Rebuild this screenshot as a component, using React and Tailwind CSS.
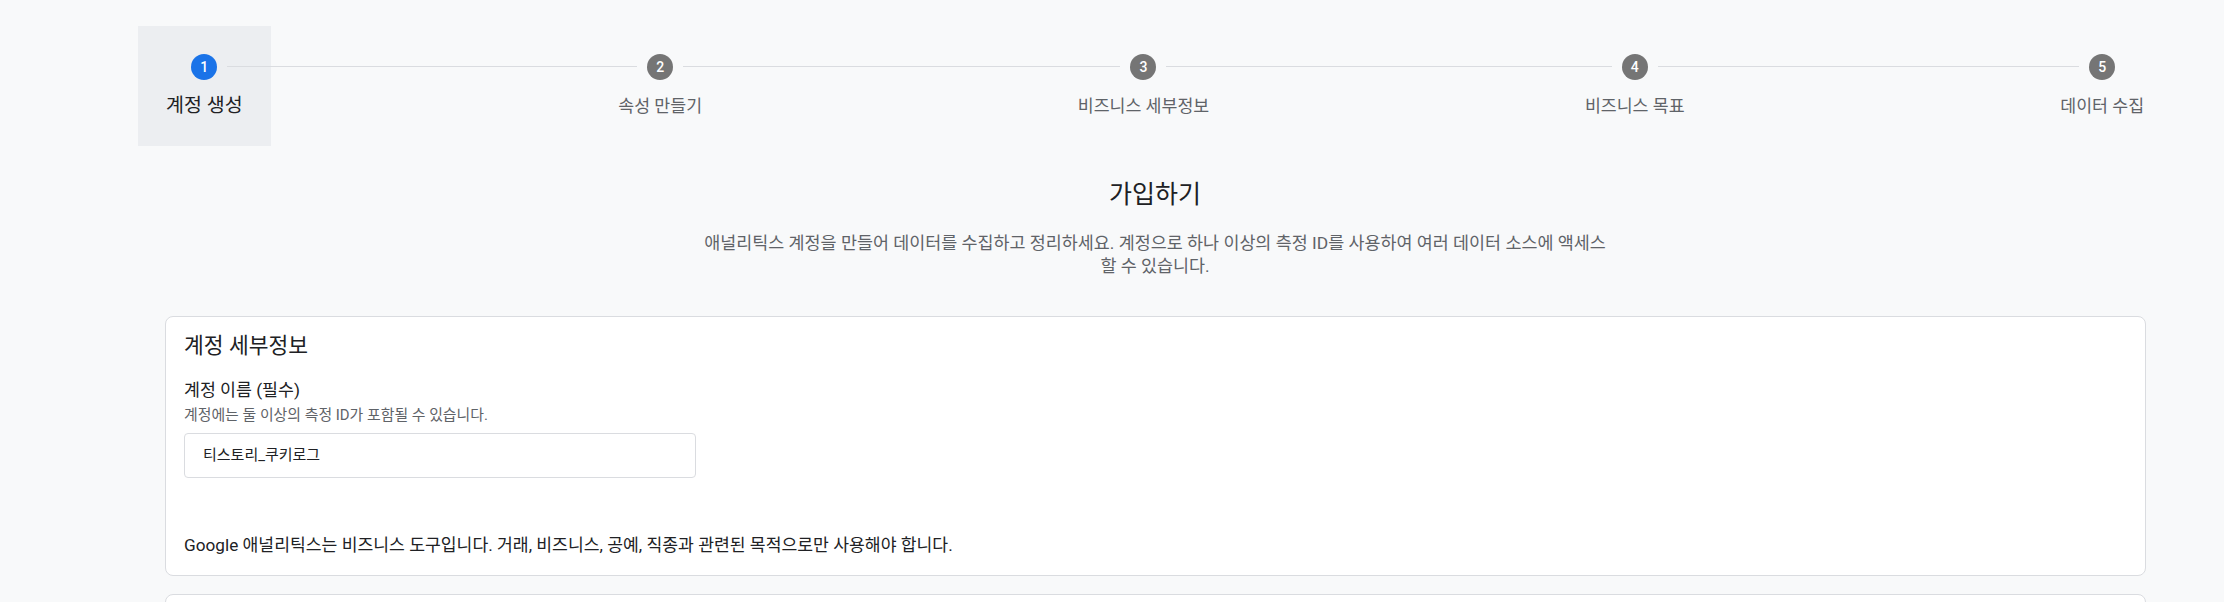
const steps = [
  { n: 1, label: "계정 생성", active: true },
  { n: 2, label: "속성 만들기" },
  { n: 3, label: "비즈니스 세부정보" },
  { n: 4, label: "비즈니스 목표" },
  { n: 5, label: "데이터 수집" },
];

function StepHeader({ step, first, last }) {
  return (
    <div className={`shrink-0 flex flex-col ${step.active ? "bg-[#eceef1]" : ""}`}>
      <div className="flex items-start pt-[28px]">
        <div className={`h-px flex-1 mt-[12px] ${first ? "" : "bg-[#dadce0]"}`} />
        <div
          className={`mx-[10px] w-[26px] h-[26px] rounded-full flex items-center justify-center text-white text-[14px] font-medium ${
            step.active ? "bg-[#1a73e8]" : "bg-[#757575]"
          }`}
        >
          {step.n}
        </div>
        <div className={`h-px flex-1 mt-[12px] ${last ? "" : "bg-[#dadce0]"}`} />
      </div>
      <div
        className={`px-7 pt-[14px] pb-[28px] leading-6 whitespace-nowrap ${
          step.active ? "text-[19.5px] text-[#202124]" : "text-[17.3px] text-[#5f6368]"
        }`}
      >
        {step.label}
      </div>
    </div>
  );
}

function Stepper() {
  const items = [];
  steps.forEach((s, i) => {
    items.push(<StepHeader key={`s${s.n}`} step={s} first={i === 0} last={i === steps.length - 1} />);
    if (i < steps.length - 1) {
      items.push(<div key={`l${s.n}`} className="h-px flex-1 mt-[40px] bg-[#dadce0]" />);
    }
  });
  return <div className="flex items-start mx-[52px]">{items}</div>;
}

export default function App() {
  return (
    <div className="min-h-screen w-full bg-[#f8f9fa] flex font-['Roboto','Noto_Sans_CJK_KR',sans-serif]">
      <div className="w-[86px] shrink-0" />
      <main className="flex-1 pt-[26px]">
        <Stepper />

        <h1 className="mt-[33px] text-center text-[25px] leading-8 text-[#202124]">가입하기</h1>
        <p className="mx-auto mt-[21px] max-w-[912px] text-center text-[17.4px] leading-[23px] text-[#5f6368]">
          애널리틱스 계정을 만들어 데이터를 수집하고 정리하세요. 계정으로 하나 이상의 측정 ID를 사용하여 여러 데이터 소스에 액세스 할 수 있습니다.
        </p>

        <section className="mt-[38px] ml-[79px] mr-[78px] bg-white border border-[#dadce0] rounded-lg px-[18px] pt-[15px] pb-[18px]">
          <h2 className="text-[21.5px] leading-7 text-[#202124]">계정 세부정보</h2>
          <div className="mt-[18px] text-[17.3px] leading-6 text-[#202124]">계정 이름 (필수)</div>
          <div className="mt-[3px] text-[14.9px] leading-5 text-[#5f6368]">계정에는 둘 이상의 측정 ID가 포함될 수 있습니다.</div>
          <div className="mt-[8px] w-[512px] h-[45px] border border-[#dadce0] rounded flex items-center pl-[18px] text-[15px] text-[#202124]">
            티스토리_쿠키로그
          </div>
          <p className="mt-[55px] text-[17.2px] leading-6 text-[#202124]">
            Google 애널리틱스는 비즈니스 도구입니다. 거래, 비즈니스, 공예, 직종과 관련된 목적으로만 사용해야 합니다.
          </p>
        </section>

        <section className="mt-[18px] ml-[79px] mr-[78px] h-[120px] bg-white border border-[#dadce0] rounded-lg" />
      </main>
    </div>
  );
}
